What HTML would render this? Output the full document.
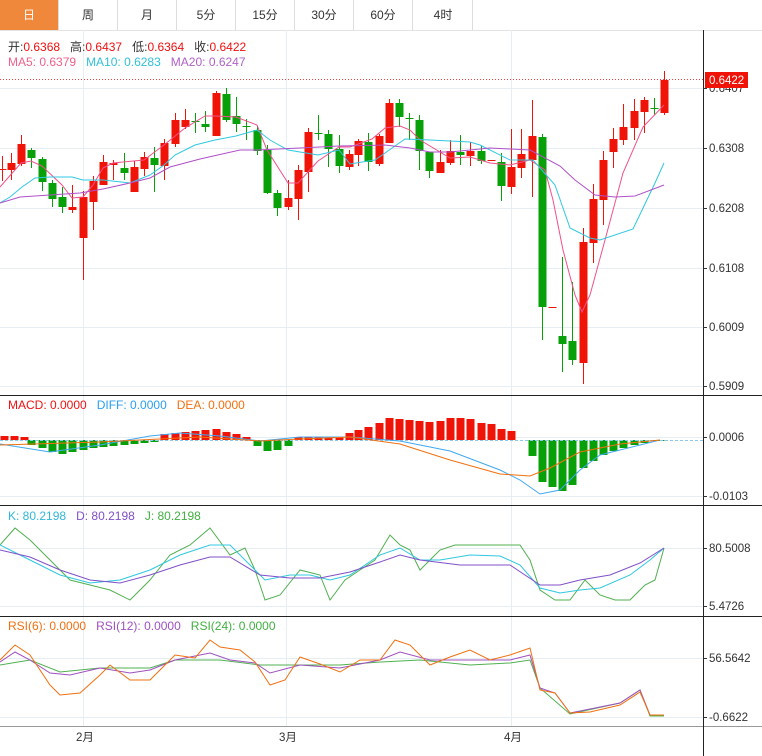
<!DOCTYPE html>
<html><head><meta charset="utf-8"><style>
body{margin:0;width:762px;height:756px;overflow:hidden;background:#fff;font-family:"Liberation Sans","Noto Sans CJK SC",sans-serif}
.tabs{position:absolute;left:0;top:0;height:30px;width:762px;border-bottom:1px solid #e3e3e3}
.tab{position:absolute;top:0;height:30px;width:58px;border-right:1px solid #ddd;text-align:center;line-height:30px;font-size:12px;color:#333}
.info{position:absolute;left:8px;font-size:12px;white-space:nowrap}
svg{position:absolute;left:0;top:0}
</style></head><body>
<div class="tabs">
<div class="tab" style="left:0;background:#f0883c;color:#fff">日</div>
<div class="tab" style="left:59px">周</div>
<div class="tab" style="left:118px">月</div>
<div class="tab" style="left:177px">5分</div>
<div class="tab" style="left:236px">15分</div>
<div class="tab" style="left:295px">30分</div>
<div class="tab" style="left:354px">60分</div>
<div class="tab" style="left:414px">4时</div>
</div>
<svg id="s" width="762" height="756" xmlns="http://www.w3.org/2000/svg"></svg>
<div class="info" style="top:38px;color:#333">开:<span style="color:#f01010">0.6368</span>&nbsp;&nbsp; 高:<span style="color:#f01010">0.6437</span>&nbsp;&nbsp; 低:<span style="color:#f01010">0.6364</span>&nbsp;&nbsp; 收:<span style="color:#f01010">0.6422</span></div>
<div class="info" style="top:55px"><span style="color:#f0608a">MA5: 0.6379</span>&nbsp;&nbsp; <span style="color:#30c0d8">MA10: 0.6283</span>&nbsp;&nbsp; <span style="color:#b060c8">MA20: 0.6247</span></div>
<div class="info" style="top:398px"><span style="color:#f01010">MACD: 0.0000</span>&nbsp;&nbsp; <span style="color:#2a9ef0">DIFF: 0.0000</span>&nbsp;&nbsp; <span style="color:#f07010">DEA: 0.0000</span></div>
<div class="info" style="top:509px"><span style="color:#30b8d8">K: 80.2198</span>&nbsp;&nbsp; <span style="color:#8050c8">D: 80.2198</span>&nbsp;&nbsp; <span style="color:#40b040">J: 80.2198</span></div>
<div class="info" style="top:619px"><span style="color:#f07010">RSI(6): 0.0000</span>&nbsp;&nbsp; <span style="color:#a050c0">RSI(12): 0.0000</span>&nbsp;&nbsp; <span style="color:#40b040">RSI(24): 0.0000</span></div>
<script>
var s=document.getElementById('s'),h='';
function L(x1,y1,x2,y2,c,w,extra){h+='<line x1="'+x1+'" y1="'+y1+'" x2="'+x2+'" y2="'+y2+'" stroke="'+c+'" stroke-width="'+(w||1)+'" '+(extra||'')+'/>';}
function R(x,y,w,hh,c){h+='<rect x="'+x+'" y="'+y+'" width="'+w+'" height="'+Math.max(hh,1)+'" fill="'+c+'"/>';}
function P(pts,c){h+='<polyline fill="none" stroke="'+c+'" stroke-width="1" points="'+pts.map(function(p){return p.join(',')}).join(' ')+'"/>';}
function T(x,y,t,c){h+='<text x="'+x+'" y="'+y+'" font-size="11.5" fill="'+(c||'#333')+'" font-family="Liberation Sans,Noto Sans CJK SC,sans-serif">'+t+'</text>';}
var g='#e6edf3';
[88,148,208,268,327,386,437,496,548,606,658,717].forEach(function(y){L(0,y+.5,703,y+.5,g);});
[83,286,511].forEach(function(x){L(x+.5,30,x+.5,726,g);});
[395,505,616].forEach(function(y){L(0,y+.5,762,y+.5,'#222');});
L(0,726.5,762,726.5,'#999');
L(703.5,30,703.5,756,'#222');
[[88,'0.6407'],[148,'0.6308'],[208,'0.6208'],[268,'0.6108'],[327,'0.6009'],[386,'0.5909'],[437,'0.0006'],[496,'-0.0103'],[548,'80.5008'],[606,'5.4726'],[658,'56.5642'],[717,'-0.6622']].forEach(function(a){L(703,a[0]+.5,707,a[0]+.5,'#333');T(709,a[0]+4,a[1]);});
T(76,741,'2月');T(279,741,'3月');T(504,741,'4月');
var c=[[2,1,169,170,156,181],[11,1,163,170,153,180],[21,1,144,164,135,166],[31,0,150,158,148,168],[42,0,159,182,157,191],[52,0,183,199,180,207],[62,0,197,207,187,213],[72,1,207,210,185,213],[83,1,197,238,191,280],[93,1,181,202,176,230],[103,1,162,185,155,185],[113,1,163,165,160,180],[124,0,168,173,153,180],[134,1,167,192,161,192],[144,1,157,169,152,176],[154,0,158,165,147,192],[164,1,143,166,139,180],[175,1,120,144,113,147],[185,1,120,127,109,129],[195,0,121,122,113,133],[205,0,124,127,111,132],[216,1,93,136,91,136],[226,0,94,120,88,122],[236,0,116,124,97,132],[246,0,126,127,119,140],[257,0,130,151,126,155],[267,0,150,193,145,194],[277,0,193,208,190,216],[288,1,198,207,180,210],[298,1,170,199,165,220],[308,1,132,172,128,192],[318,0,133,134,115,140],[328,0,134,149,130,167],[339,0,149,166,135,173],[349,1,154,167,150,170],[358,1,141,155,139,166],[368,0,142,162,133,171],[379,1,136,164,134,166],[389,1,103,143,99,143],[399,0,103,117,99,127],[409,0,118,119,113,140],[419,0,120,151,115,170],[429,0,152,171,152,178],[440,1,162,173,150,173],[450,1,151,163,140,165],[460,0,152,155,135,165],[470,1,151,156,142,166],[481,0,151,161,146,164],[491,1,160,161,160,161],[501,0,162,186,153,201],[511,1,167,187,129,194],[521,1,154,168,129,178],[532,1,136,160,100,197],[542,0,137,307,134,340],[552,1,307,308,307,308],[562,0,336,344,257,372],[572,0,341,360,282,365],[583,1,242,363,228,384],[593,1,199,243,184,263],[603,1,160,200,151,225],[613,1,139,152,128,168],[623,1,127,140,104,145],[634,1,111,128,99,140],[644,1,100,112,97,133],[654,0,108,109,98,115],[664,1,80,113,71,115]];
c.forEach(function(k){var col=k[1]?'#f01408':'#08a008';L(k[0]+.5,k[4],k[0]+.5,k[5],col);R(k[0]-3.5,k[2],8,k[3]-k[2],col);});
P([[0,187],[21,163],[31,161],[42,166],[62,185],[72,198],[83,197],[93,185],[103,168],[113,163],[144,160],[164,145],[185,128],[205,116],[216,116],[236,117],[257,125],[267,150],[288,183],[298,183],[318,161],[339,147],[350,147],[372,139],[385,128],[400,126],[410,130],[420,140],[450,158],[470,157],[490,163],[510,165],[530,160],[545,170],[553,200],[563,250],[575,295],[582,312],[590,295],[605,240],[623,173],[643,127],[664,105]],'#f0508a');
P([[0,203],[10,197],[22,187],[35,178],[50,177],[72,177],[83,180],[103,180],[130,183],[150,175],[164,165],[175,155],[195,145],[215,140],[236,136],[257,130],[270,140],[288,150],[318,155],[339,150],[350,164],[375,160],[405,139],[430,140],[470,142],[480,145],[510,160],[533,160],[555,185],[570,228],[590,238],[600,240],[633,229],[655,183],[664,163]],'#30c8e0');
P([[0,203],[20,197],[50,195],[80,193],[103,189],[130,183],[150,178],[170,167],[200,159],[240,150],[257,150],[300,148],[339,146],[385,145],[410,148],[430,152],[450,152],[490,148],[530,150],[560,166],[575,180],[595,195],[615,197],[635,196],[664,185]],'#b050c8');
L(0,79.5,703,79.5,'#f04040',1,'stroke-dasharray="1,2"');
R(705,72,43,16,'#f01408');h+='<text x="709" y="84" font-size="11.5" fill="#fff" font-family="Liberation Sans,sans-serif">0.6422</text>';
var mb=[[4,436],[14,436],[24,437],[31,445],[42,448],[52,452],[62,454],[72,452],[83,450],[93,448],[103,447],[113,446],[124,445],[134,444],[144,443],[154,442],[164,434],[175,433],[185,432],[195,431],[205,430],[216,429],[226,432],[236,434],[246,437],[257,446],[267,451],[277,450],[288,446],[298,437],[308,437],[318,437],[328,438],[339,437],[349,433],[358,430],[368,427],[379,423],[389,418],[399,419],[409,420],[419,421],[429,422],[440,421],[450,418],[460,418],[470,419],[481,423],[491,424],[501,429],[511,431],[532,456],[542,482],[552,487],[562,491],[572,485],[583,468],[593,461],[603,455],[613,451],[623,448],[634,445],[644,443],[654,441],[660,441]];
mb.forEach(function(b){var z=440,col=b[1]<z?'#f01408':'#08a008';R(b[0]-3.5,Math.min(z,b[1]),8,Math.abs(b[1]-z),col);});
L(0,440.5,703,440.5,'#8cc8f0',1,'stroke-dasharray="3,2"');
P([[0,444],[50,452],[100,445],[150,436],[180,433],[220,436],[260,441],[300,437],[350,437],[400,441],[450,451],[500,470],[520,480],[540,494],[560,490],[580,470],[600,455],[640,445],[660,440]],'#40a8f0');
P([[0,445],[100,442],[200,437],[260,441],[300,439],[350,437],[400,444],[450,460],[500,474],[530,476],[550,468],[580,452],[620,444],[660,440]],'#f07010');
P([[0,545],[15,528],[30,540],[50,560],[70,580],[90,585],[110,590],[130,600],[150,580],[170,555],[190,545],[210,528],[230,555],[245,548],[255,570],[265,600],[280,595],[300,570],[320,575],[330,600],[345,580],[360,570],[375,560],[390,535],[400,545],[410,550],[420,570],[430,560],[440,550],[455,545],[470,545],[500,545],[520,545],[530,560],[540,590],[555,600],[570,600],[585,580],[600,595],[615,600],[630,600],[645,585],[655,580],[664,548]],'#50b050');
P([[0,545],[30,560],[60,575],[90,583],[120,580],[150,570],[180,555],[210,545],[230,545],[250,565],[265,580],[290,575],[310,575],[330,580],[350,575],[380,555],[400,548],[420,560],[440,560],[470,555],[500,556],[520,565],[540,588],[560,593],[580,590],[600,588],[630,575],[650,560],[664,548]],'#30c8e0');
P([[0,550],[30,557],[60,570],[90,580],[120,583],[150,575],[180,565],[210,557],[230,557],[260,575],[290,578],[320,578],[350,572],[380,562],[400,555],[420,560],[460,565],[510,565],[540,585],[560,585],[580,580],[610,575],[640,563],[664,548]],'#8050c8');
P([[0,665],[30,660],[60,672],[100,668],[150,668],[175,660],[220,660],[260,665],[300,665],[340,665],[380,662],[420,660],[470,665],[510,663],[530,660],[540,688],[570,714],[620,703],[640,690],[650,716],[664,716]],'#50b050');
P([[0,662],[15,652],[30,660],[50,673],[70,675],[100,668],[130,673],[150,670],[175,660],[210,653],[230,660],[255,663],[270,673],[300,665],[340,668],[380,660],[400,652],[430,660],[470,660],[510,660],[530,655],[540,688],[555,693],[570,713],[620,703],[640,690],[650,715],[664,715]],'#a050c0');
P([[0,660],[15,645],[30,655],[50,685],[60,695],[80,693],[100,675],[110,665],[130,680],[150,680],[165,665],[175,655],[195,658],[210,640],[220,647],[240,650],[255,662],[270,685],[285,680],[300,657],[320,664],[340,672],[360,660],[380,660],[395,640],[410,645],[430,665],[450,657],[470,650],[490,660],[510,655],[530,648],[540,690],[555,693],[570,713],[590,712],[620,705],[640,692],[650,715],[664,715]],'#f07010');
s.innerHTML=h;
</script>
</body></html>
